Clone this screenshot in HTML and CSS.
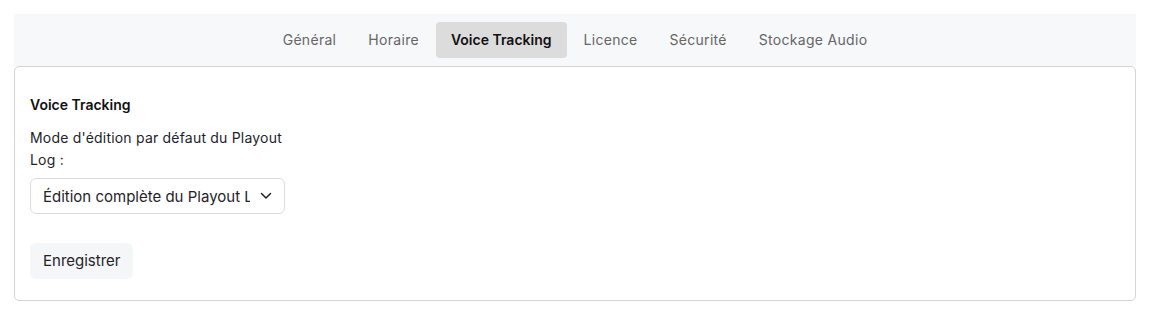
FILE: index.html
```html
<!DOCTYPE html>
<html>
<head>
<title>Paramètres</title>
<link rel="stylesheet" href="styles.css">
</head>
<body>

<div class="page">
  <nav class="tabs">
    <a class="tab">Général</a>
    <a class="tab">Horaire</a>
    <a class="tab active">Voice Tracking</a>
    <a class="tab">Licence</a>
    <a class="tab">Sécurité</a>
    <a class="tab">Stockage Audio</a>
  </nav>

  <div class="card">
    <h3>Voice Tracking</h3>
    <form class="form-group">
      <label for="editMode">Mode d'édition par défaut du Playout Log :</label>
      <div class="select-wrap">
        <select id="editMode" name="editMode">
          <option>Édition complète du Playout Log</option>
          <option>Édition limitée</option>
        </select>
        <svg class="chevron" width="12" height="8" viewBox="0 0 12 8"><path d="M1.5 1.5 L6 6 L10.5 1.5" fill="none" stroke="#222" stroke-width="1.5" stroke-linecap="round" stroke-linejoin="round"/></svg>
      </div>
      <button type="button" class="btn">Enregistrer</button>
    </form>
  </div>
</div>

</body>
</html>
```

FILE: styles.css
```css
body {
  font-family: Inter, "Noto Sans", sans-serif;
  background-color: #fff;
  color: #1f2328;
  margin: 0;
  padding: 14px;
}

.tabs {
  display: flex;
  justify-content: center;
  gap: 2px;
  padding: 8px 0;
  background-color: #f7f8fa;
}

.tab {
  padding: 0 15px;
  height: 36px;
  line-height: 36px;
  font-size: 14px;
  letter-spacing: 0.3px;
  color: #666;
  border-radius: 4px;
  cursor: pointer;
}

.tab.active {
  background-color: #dcdcdc;
  color: #111;
  font-weight: 600;
  letter-spacing: 0;
}

.card {
  border: 1px solid #d4d4d4;
  border-radius: 5px;
  padding: 28px 15px 21px;
}

.card h3 {
  margin: 0 0 12px;
  font-size: 14px;
  line-height: 20px;
  font-weight: 600;
  color: #111;
}

.form-group {
  width: 255px;
}

label {
  display: block;
  font-size: 14px;
  line-height: 22px;
  letter-spacing: 0.2px;
  color: #1f2328;
}

.select-wrap {
  position: relative;
  margin-top: 7px;
}

select {
  appearance: none;
  -webkit-appearance: none;
  display: block;
  width: 255px;
  height: 36px;
  padding: 0 34px 0 12px;
  font-family: inherit;
  font-size: 15px;
  color: #1f2328;
  background-color: #fff;
  border: 1px solid #dcdcdc;
  border-radius: 6px;
  box-sizing: border-box;
}

.chevron {
  position: absolute;
  right: 13px;
  top: 14px;
  pointer-events: none;
}

.btn {
  display: block;
  margin-top: 29px;
  height: 36px;
  padding: 0 13px 2px;
  font-family: inherit;
  font-size: 15px;
  color: #1f2328;
  background-color: #f5f6f8;
  border: none;
  border-radius: 6px;
  cursor: pointer;
}
```
